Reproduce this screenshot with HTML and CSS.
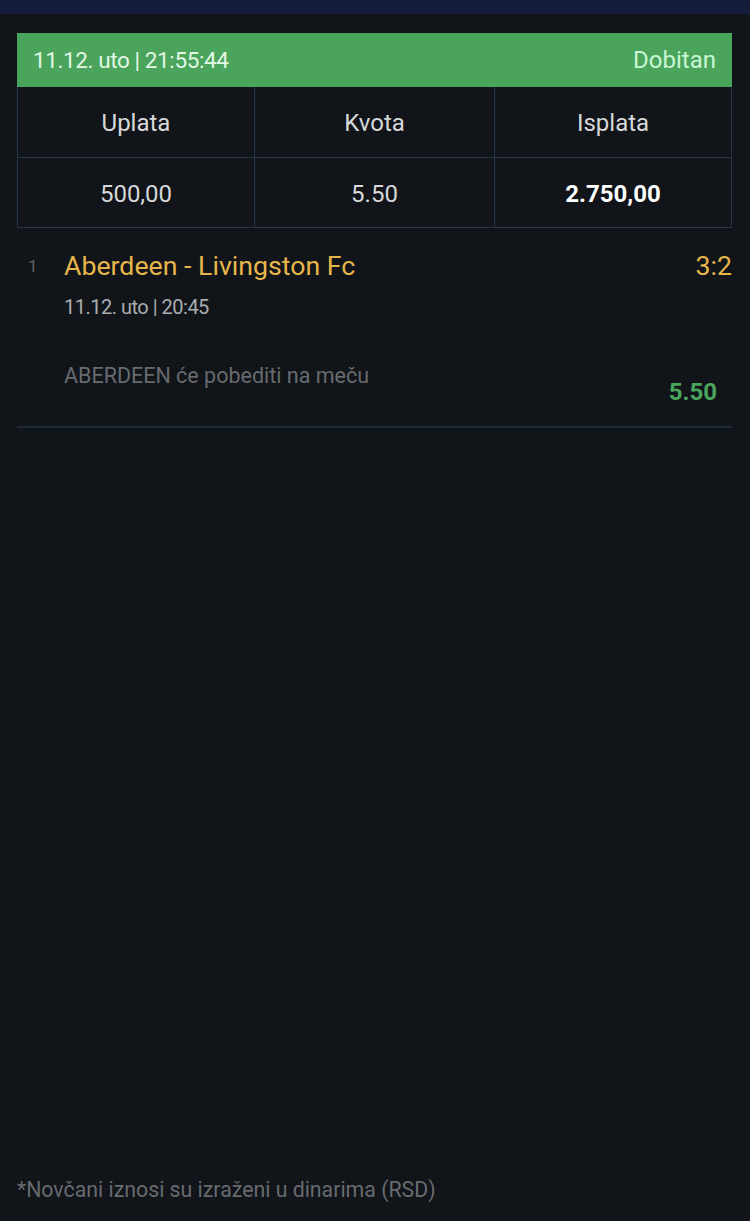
FILE: index.html
```html
<!DOCTYPE html>
<html lang="sr">
<head>
    <meta charset="UTF-8">
    <meta name="viewport" content="width=device-width, initial-scale=1.0">
    <title>Tiket</title>
    <link rel="stylesheet" href="styles.css">
</head>
<body>

    <!-- Top bar -->
    <div class="top-bar"></div>

    <main class="ticket">
        <!-- Ticket summary -->
        <section class="summary">
            <div class="status">
                <span class="status-date">11.12. uto | 21:55:44</span>
                <span class="status-state">Dobitan</span>
            </div>
            <div class="grid">
                <div class="cell">Uplata</div>
                <div class="cell">Kvota</div>
                <div class="cell">Isplata</div>
                <div class="cell">500,00</div>
                <div class="cell">5.50</div>
                <div class="cell strong">2.750,00</div>
            </div>
        </section>

        <!-- Matches -->
        <section class="match">
            <div class="num">1</div>
            <div class="match-body">
                <div class="match-head">
                    <span class="teams">Aberdeen - Livingston Fc</span>
                    <span class="score">3:2</span>
                </div>
                <div class="match-time">11.12. uto | 20:45</div>
                <div class="pick">
                    <span class="pick-text">ABERDEEN će pobediti na meču</span>
                    <span class="odd">5.50</span>
                </div>
            </div>
        </section>
    </main>

    <footer class="note">*Novčani iznosi su izraženi u dinarima (RSD)</footer>

</body>
</html>
```

FILE: styles.css
```css
/* General */
* { margin: 0; padding: 0; box-sizing: border-box; }
body { background: #111418; font-family: Roboto, "Liberation Sans", sans-serif; color: #d8d8d8;
    width: 750px; height: 1221px; display: flex; flex-direction: column; overflow: hidden; }

.top-bar { height: 14px; background: #141d3b; }

.ticket { padding: 19px 18px 0 17px; flex: 1; }

/* Summary box */
.summary { border: 1px solid #24364a; }
.status { display: flex; justify-content: space-between; align-items: center; height: 54px;
    background: #4aa45b; padding: 0 16px; font-size: 24px; color: #e3f7e6; margin: -1px -1px 0; }
.status-date { font-size: 22.5px; letter-spacing: -0.4px; }
.status-state { color: #c9f6d3; }

.grid { display: grid; grid-template-columns: 237px 240px 1fr; }
.cell { height: 70px; display: flex; align-items: center; justify-content: center; padding-top: 2px;
    font-size: 24px; color: #d6d8da; border-right: 1px solid #24364a; border-top: 1px solid #24364a; }
.cell:nth-child(3n) { border-right: none; }
.cell:nth-child(-n+3) { border-top: none; }
.cell.strong { font-weight: bold; color: #fff; }

/* Match row */
.match { display: flex; border-bottom: 2px solid #1c2b3a; padding: 22px 0 20px; }
.num { width: 47px; padding-left: 11px; padding-top: 6px; font-size: 17px; color: #5e6266; }
.match-body { flex: 1; }
.match-head { display: flex; justify-content: space-between; align-items: baseline;
    font-size: 26.7px; color: #e6b64b; line-height: 32px; }
.match-time { font-size: 20px; letter-spacing: -0.5px; color: #a9adb1; margin-top: 13px; }
.pick { display: flex; justify-content: space-between; margin-top: 44px; }
.pick-text { font-size: 21.5px; color: #676b6f; }
.odd { font-size: 24px; font-weight: bold; color: #4aa45b; margin-top: 15px; margin-right: 15px; }

/* Footer */
.note { padding: 0 0 19px 17px; font-size: 21.3px; color: #676b6f; }
```
